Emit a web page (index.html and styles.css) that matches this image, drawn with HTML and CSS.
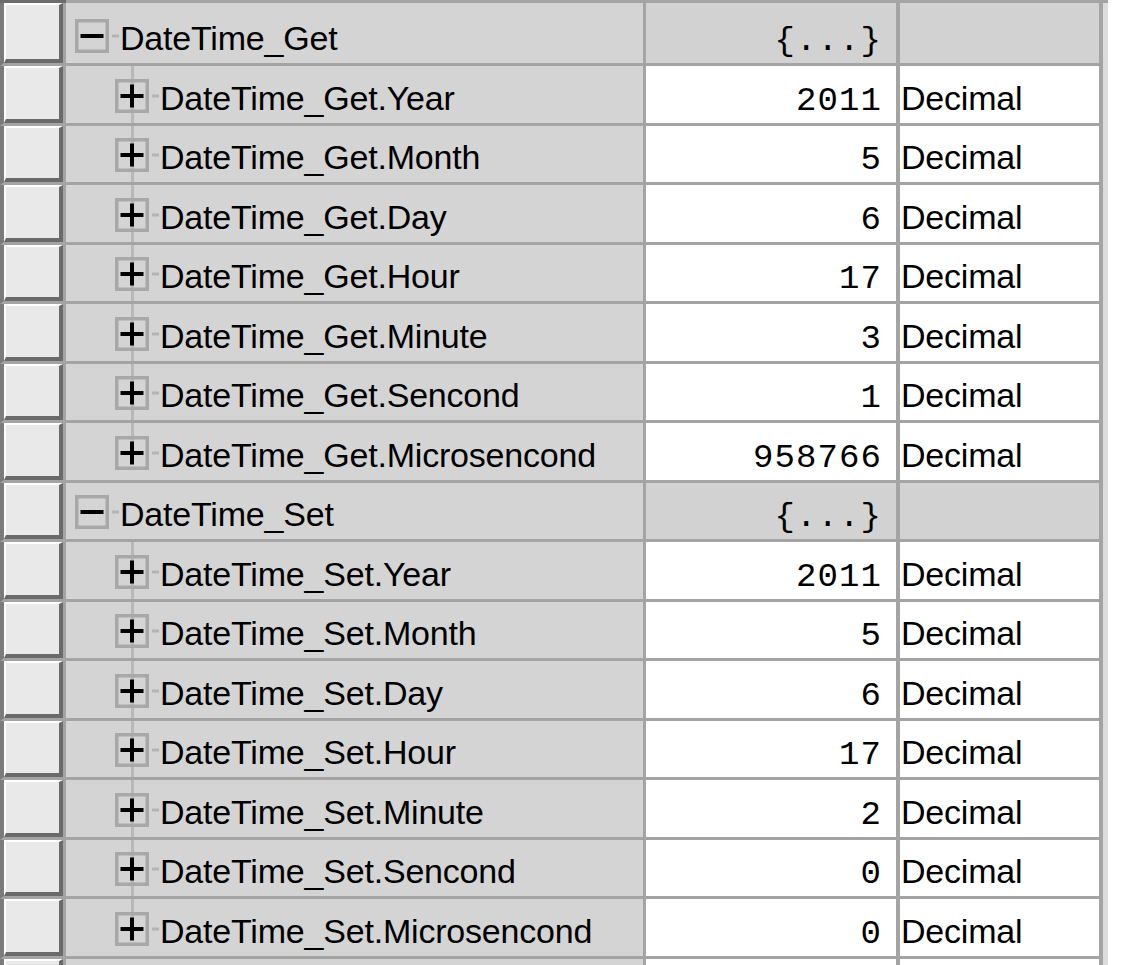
FILE: index.html
```html
<!DOCTYPE html>
<html>
<head>
<meta charset="utf-8">
<link rel="stylesheet" href="styles.css">
</head>
<body>
<div class="grid">
  <div class="topband"><div class="tb-h"></div><div class="tb-r"></div></div>

  <div class="row first group">
    <div class="hdr"><div class="btn"></div></div>
    <div class="name lvl0"><svg class="tw" width="45" height="34" viewBox="0 0 45 34"><rect x="1.75" y="1.75" width="30.5" height="30.5" fill="none" stroke="#a8a8a8" stroke-width="3.5"/><path d="M5.5 17H28.5" stroke="#000" stroke-width="4"/><path d="M37 17H44" stroke="#b4b4b4" stroke-width="3"/></svg><span class="label">DateTime_Get</span></div>
    <div class="val">{...}</div>
    <div class="type"></div>
    <div class="strip"></div>
  </div>

  <div class="row">
    <div class="hdr"><div class="btn"></div></div>
    <div class="name lvl1"><svg class="tw" width="45" height="34" viewBox="0 0 45 34"><rect x="1.75" y="1.75" width="30.5" height="30.5" fill="none" stroke="#a8a8a8" stroke-width="3.5"/><path d="M5.5 17H28.5M17 5.5V28.5" stroke="#000" stroke-width="4"/><path d="M37 17H44" stroke="#b4b4b4" stroke-width="3"/></svg><span class="label">DateTime_Get.Year</span></div>
    <div class="val">2011</div>
    <div class="type">Decimal</div>
    <div class="strip"></div>
  </div>

  <div class="row">
    <div class="hdr"><div class="btn"></div></div>
    <div class="name lvl1"><svg class="tw" width="45" height="34" viewBox="0 0 45 34"><rect x="1.75" y="1.75" width="30.5" height="30.5" fill="none" stroke="#a8a8a8" stroke-width="3.5"/><path d="M5.5 17H28.5M17 5.5V28.5" stroke="#000" stroke-width="4"/><path d="M37 17H44" stroke="#b4b4b4" stroke-width="3"/></svg><span class="label">DateTime_Get.Month</span></div>
    <div class="val">5</div>
    <div class="type">Decimal</div>
    <div class="strip"></div>
  </div>

  <div class="row">
    <div class="hdr"><div class="btn"></div></div>
    <div class="name lvl1"><svg class="tw" width="45" height="34" viewBox="0 0 45 34"><rect x="1.75" y="1.75" width="30.5" height="30.5" fill="none" stroke="#a8a8a8" stroke-width="3.5"/><path d="M5.5 17H28.5M17 5.5V28.5" stroke="#000" stroke-width="4"/><path d="M37 17H44" stroke="#b4b4b4" stroke-width="3"/></svg><span class="label">DateTime_Get.Day</span></div>
    <div class="val">6</div>
    <div class="type">Decimal</div>
    <div class="strip"></div>
  </div>

  <div class="row">
    <div class="hdr"><div class="btn"></div></div>
    <div class="name lvl1"><svg class="tw" width="45" height="34" viewBox="0 0 45 34"><rect x="1.75" y="1.75" width="30.5" height="30.5" fill="none" stroke="#a8a8a8" stroke-width="3.5"/><path d="M5.5 17H28.5M17 5.5V28.5" stroke="#000" stroke-width="4"/><path d="M37 17H44" stroke="#b4b4b4" stroke-width="3"/></svg><span class="label">DateTime_Get.Hour</span></div>
    <div class="val">17</div>
    <div class="type">Decimal</div>
    <div class="strip"></div>
  </div>

  <div class="row">
    <div class="hdr"><div class="btn"></div></div>
    <div class="name lvl1"><svg class="tw" width="45" height="34" viewBox="0 0 45 34"><rect x="1.75" y="1.75" width="30.5" height="30.5" fill="none" stroke="#a8a8a8" stroke-width="3.5"/><path d="M5.5 17H28.5M17 5.5V28.5" stroke="#000" stroke-width="4"/><path d="M37 17H44" stroke="#b4b4b4" stroke-width="3"/></svg><span class="label">DateTime_Get.Minute</span></div>
    <div class="val">3</div>
    <div class="type">Decimal</div>
    <div class="strip"></div>
  </div>

  <div class="row">
    <div class="hdr"><div class="btn"></div></div>
    <div class="name lvl1"><svg class="tw" width="45" height="34" viewBox="0 0 45 34"><rect x="1.75" y="1.75" width="30.5" height="30.5" fill="none" stroke="#a8a8a8" stroke-width="3.5"/><path d="M5.5 17H28.5M17 5.5V28.5" stroke="#000" stroke-width="4"/><path d="M37 17H44" stroke="#b4b4b4" stroke-width="3"/></svg><span class="label">DateTime_Get.Sencond</span></div>
    <div class="val">1</div>
    <div class="type">Decimal</div>
    <div class="strip"></div>
  </div>

  <div class="row">
    <div class="hdr"><div class="btn"></div></div>
    <div class="name lvl1 last"><svg class="tw" width="45" height="34" viewBox="0 0 45 34"><rect x="1.75" y="1.75" width="30.5" height="30.5" fill="none" stroke="#a8a8a8" stroke-width="3.5"/><path d="M5.5 17H28.5M17 5.5V28.5" stroke="#000" stroke-width="4"/><path d="M37 17H44" stroke="#b4b4b4" stroke-width="3"/></svg><span class="label">DateTime_Get.Microsencond</span></div>
    <div class="val">958766</div>
    <div class="type">Decimal</div>
    <div class="strip"></div>
  </div>

  <div class="row group">
    <div class="hdr"><div class="btn"></div></div>
    <div class="name lvl0"><svg class="tw" width="45" height="34" viewBox="0 0 45 34"><rect x="1.75" y="1.75" width="30.5" height="30.5" fill="none" stroke="#a8a8a8" stroke-width="3.5"/><path d="M5.5 17H28.5" stroke="#000" stroke-width="4"/><path d="M37 17H44" stroke="#b4b4b4" stroke-width="3"/></svg><span class="label">DateTime_Set</span></div>
    <div class="val">{...}</div>
    <div class="type"></div>
    <div class="strip"></div>
  </div>

  <div class="row">
    <div class="hdr"><div class="btn"></div></div>
    <div class="name lvl1"><svg class="tw" width="45" height="34" viewBox="0 0 45 34"><rect x="1.75" y="1.75" width="30.5" height="30.5" fill="none" stroke="#a8a8a8" stroke-width="3.5"/><path d="M5.5 17H28.5M17 5.5V28.5" stroke="#000" stroke-width="4"/><path d="M37 17H44" stroke="#b4b4b4" stroke-width="3"/></svg><span class="label">DateTime_Set.Year</span></div>
    <div class="val">2011</div>
    <div class="type">Decimal</div>
    <div class="strip"></div>
  </div>

  <div class="row">
    <div class="hdr"><div class="btn"></div></div>
    <div class="name lvl1"><svg class="tw" width="45" height="34" viewBox="0 0 45 34"><rect x="1.75" y="1.75" width="30.5" height="30.5" fill="none" stroke="#a8a8a8" stroke-width="3.5"/><path d="M5.5 17H28.5M17 5.5V28.5" stroke="#000" stroke-width="4"/><path d="M37 17H44" stroke="#b4b4b4" stroke-width="3"/></svg><span class="label">DateTime_Set.Month</span></div>
    <div class="val">5</div>
    <div class="type">Decimal</div>
    <div class="strip"></div>
  </div>

  <div class="row">
    <div class="hdr"><div class="btn"></div></div>
    <div class="name lvl1"><svg class="tw" width="45" height="34" viewBox="0 0 45 34"><rect x="1.75" y="1.75" width="30.5" height="30.5" fill="none" stroke="#a8a8a8" stroke-width="3.5"/><path d="M5.5 17H28.5M17 5.5V28.5" stroke="#000" stroke-width="4"/><path d="M37 17H44" stroke="#b4b4b4" stroke-width="3"/></svg><span class="label">DateTime_Set.Day</span></div>
    <div class="val">6</div>
    <div class="type">Decimal</div>
    <div class="strip"></div>
  </div>

  <div class="row">
    <div class="hdr"><div class="btn"></div></div>
    <div class="name lvl1"><svg class="tw" width="45" height="34" viewBox="0 0 45 34"><rect x="1.75" y="1.75" width="30.5" height="30.5" fill="none" stroke="#a8a8a8" stroke-width="3.5"/><path d="M5.5 17H28.5M17 5.5V28.5" stroke="#000" stroke-width="4"/><path d="M37 17H44" stroke="#b4b4b4" stroke-width="3"/></svg><span class="label">DateTime_Set.Hour</span></div>
    <div class="val">17</div>
    <div class="type">Decimal</div>
    <div class="strip"></div>
  </div>

  <div class="row">
    <div class="hdr"><div class="btn"></div></div>
    <div class="name lvl1"><svg class="tw" width="45" height="34" viewBox="0 0 45 34"><rect x="1.75" y="1.75" width="30.5" height="30.5" fill="none" stroke="#a8a8a8" stroke-width="3.5"/><path d="M5.5 17H28.5M17 5.5V28.5" stroke="#000" stroke-width="4"/><path d="M37 17H44" stroke="#b4b4b4" stroke-width="3"/></svg><span class="label">DateTime_Set.Minute</span></div>
    <div class="val">2</div>
    <div class="type">Decimal</div>
    <div class="strip"></div>
  </div>

  <div class="row">
    <div class="hdr"><div class="btn"></div></div>
    <div class="name lvl1"><svg class="tw" width="45" height="34" viewBox="0 0 45 34"><rect x="1.75" y="1.75" width="30.5" height="30.5" fill="none" stroke="#a8a8a8" stroke-width="3.5"/><path d="M5.5 17H28.5M17 5.5V28.5" stroke="#000" stroke-width="4"/><path d="M37 17H44" stroke="#b4b4b4" stroke-width="3"/></svg><span class="label">DateTime_Set.Sencond</span></div>
    <div class="val">0</div>
    <div class="type">Decimal</div>
    <div class="strip"></div>
  </div>

  <div class="row">
    <div class="hdr"><div class="btn"></div></div>
    <div class="name lvl1 last"><svg class="tw" width="45" height="34" viewBox="0 0 45 34"><rect x="1.75" y="1.75" width="30.5" height="30.5" fill="none" stroke="#a8a8a8" stroke-width="3.5"/><path d="M5.5 17H28.5M17 5.5V28.5" stroke="#000" stroke-width="4"/><path d="M37 17H44" stroke="#b4b4b4" stroke-width="3"/></svg><span class="label">DateTime_Set.Microsencond</span></div>
    <div class="val">0</div>
    <div class="type">Decimal</div>
    <div class="strip"></div>
  </div>

  <div class="row tail">
    <div class="hdr"><div class="btn"></div></div>
    <div class="name"></div>
    <div class="val"></div>
    <div class="type"></div>
    <div class="strip"></div>
  </div>
</div>
</body>
</html>
```

FILE: styles.css
```css
html, body {
  margin: 0;
  padding: 0;
  background: #ffffff;
  overflow: hidden;
  height: 965px;
}

.grid {
  width: 1108px;
  font-family: "Liberation Sans", Arial, sans-serif;
  font-size: 34px;
  color: #000;
}

.topband {
  display: flex;
  height: 3px;
}
.tb-h {
  width: 66px;
  background: #6c6c6c;
}
.tb-r {
  flex: 1;
  background: #a4a4a4;
}

.row {
  display: flex;
  height: 59.5px;
}
.row.first {
  height: 63px;
}
.row.tail {
  height: 6.5px;
}

.row > div {
  box-sizing: border-box;
  height: 100%;
  border-bottom: 3.5px solid #a4a4a4;
}
.row.tail > div {
  border-bottom: 0;
}

.hdr {
  width: 66px;
  border-left: 4px solid #7b7b7b;
  border-right: 3px solid #a4a4a4;
}
.btn {
  box-sizing: border-box;
  height: 100%;
  background: #e9e9e9;
  border-top: 2px solid #ffffff;
  border-left: 2px solid #ffffff;
  border-right: 4px solid #6a6a6a;
  border-bottom: 4px solid #6a6a6a;
}
.tail .btn {
  border-bottom: 0;
}

.name {
  width: 580px;
  background: #d4d4d4;
  border-right: 3px solid #a4a4a4;
  display: flex;
  align-items: flex-end;
  position: relative;
  white-space: nowrap;
}
.name.lvl0 {
  padding-left: 9px;
}
.name.lvl1 {
  padding-left: 49px;
}
.name.lvl1::before {
  content: "";
  position: absolute;
  left: 65px;
  width: 3px;
  top: 0;
  bottom: 0;
  background: #b8b8b8;
}
.name.lvl1.last::before {
  bottom: 27px;
}

.tw {
  display: block;
  flex: none;
  margin-bottom: 10px;
  position: relative;
}

.label {
  display: block;
  line-height: 34px;
  margin-bottom: 8px;
  letter-spacing: -0.2px;
}

.val {
  width: 254px;
  background: #ffffff;
  border-right: 4px solid #a4a4a4;
  display: flex;
  align-items: flex-end;
  justify-content: flex-end;
  padding-right: 14px;
  padding-bottom: 5px;
  font-family: "Liberation Mono", "Courier New", monospace;
  font-size: 34px;
  line-height: 34px;
  letter-spacing: 1.1px;
}

.type {
  width: 203px;
  background: #ffffff;
  border-right: 4px solid #a4a4a4;
  display: flex;
  align-items: flex-end;
  padding-left: 1px;
  padding-bottom: 8px;
  line-height: 34px;
  letter-spacing: -0.2px;
}

.group .val,
.group .type {
  background: #d2d2d2;
}

.strip {
  width: 5px;
  background: #dcdcdc;
  border-bottom-color: #dcdcdc !important;
}
```
